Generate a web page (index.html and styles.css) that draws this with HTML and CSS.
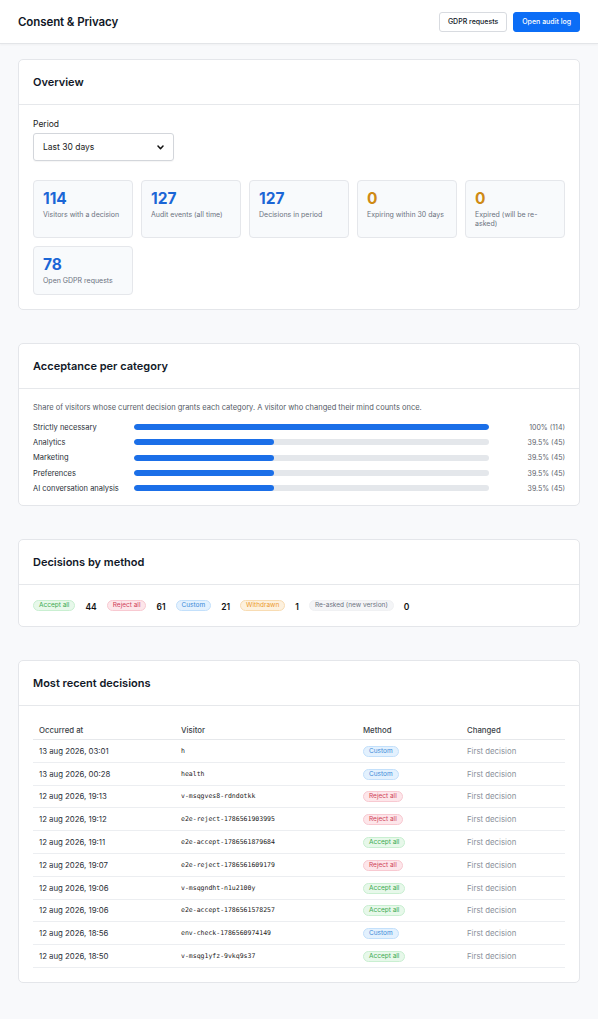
FILE: index.html
```html
<!DOCTYPE html>
<html lang="en">
<head>
<meta charset="utf-8">
<title>Consent & Privacy</title>
<link rel="stylesheet" href="styles.css">
</head>
<body>
<header class="topbar">
  <h1 class="page-title">Consent &amp; Privacy</h1>
  <div class="actions">
    <button class="btn btn-secondary">GDPR requests</button>
    <button class="btn btn-primary">Open audit log</button>
  </div>
</header>
<main class="content">
  <section class="card">
    <div class="card-header"><h2>Overview</h2></div>
    <div class="card-body">
      <label class="field-label">Period</label>
      <div class="select">
        <span>Last 30 days</span>
        <svg class="chev" width="7" height="5" viewBox="0 0 7 5"><path d="M1 1 L3.5 3.7 L6 1" fill="none" stroke="#111" stroke-width="1.5" stroke-linecap="round" stroke-linejoin="round"/></svg>
      </div>
      <div class="stats">
        <div class="stat"><div class="num blue">114</div><div class="lbl">Visitors with a decision</div></div>
        <div class="stat"><div class="num blue">127</div><div class="lbl">Audit events (all time)</div></div>
        <div class="stat"><div class="num blue">127</div><div class="lbl">Decisions in period</div></div>
        <div class="stat"><div class="num orange">0</div><div class="lbl">Expiring within 30 days</div></div>
        <div class="stat"><div class="num orange">0</div><div class="lbl">Expired (will be re-asked)</div></div>
        <div class="stat short"><div class="num blue">78</div><div class="lbl">Open GDPR requests</div></div>
      </div>
    </div>
  </section>

  <section class="card">
    <div class="card-header"><h2>Acceptance per category</h2></div>
    <div class="card-body bars-body">
      <p class="desc">Share of visitors whose current decision grants each category. A visitor who changed their mind counts once.</p>
      <div class="bars">
        <div class="bar-row"><span class="bar-label">Strictly necessary</span><div class="track"><div class="fill" style="width:100%"></div></div><span class="bar-val">100% (114)</span></div>
        <div class="bar-row"><span class="bar-label">Analytics</span><div class="track"><div class="fill" style="width:39.5%"></div></div><span class="bar-val">39.5% (45)</span></div>
        <div class="bar-row"><span class="bar-label">Marketing</span><div class="track"><div class="fill" style="width:39.5%"></div></div><span class="bar-val">39.5% (45)</span></div>
        <div class="bar-row"><span class="bar-label">Preferences</span><div class="track"><div class="fill" style="width:39.5%"></div></div><span class="bar-val">39.5% (45)</span></div>
        <div class="bar-row"><span class="bar-label">AI conversation analysis</span><div class="track"><div class="fill" style="width:39.5%"></div></div><span class="bar-val">39.5% (45)</span></div>
      </div>
    </div>
  </section>

  <section class="card">
    <div class="card-header"><h2>Decisions by method</h2></div>
    <div class="card-body methods">
      <span class="badge green">Accept all</span><span class="count">44</span>
      <span class="badge red">Reject all</span><span class="count">61</span>
      <span class="badge blue-b">Custom</span><span class="count">21</span>
      <span class="badge orange-b">Withdrawn</span><span class="count">1</span>
      <span class="badge gray">Re-asked (new version)</span><span class="count">0</span>
    </div>
  </section>

  <section class="card">
    <div class="card-header"><h2>Most recent decisions</h2></div>
    <div class="card-body">
      <table class="table">
        <thead>
          <tr><th class="c1">Occurred at</th><th class="c2">Visitor</th><th class="c3">Method</th><th>Changed</th></tr>
        </thead>
        <tbody>
          <tr><td>13 aug 2026, 03:01</td><td class="mono">h</td><td><span class="badge blue-b">Custom</span></td><td class="muted">First decision</td></tr>
          <tr><td>13 aug 2026, 00:28</td><td class="mono">health</td><td><span class="badge blue-b">Custom</span></td><td class="muted">First decision</td></tr>
          <tr><td>12 aug 2026, 19:13</td><td class="mono">v-msqgves8-rdndotkk</td><td><span class="badge red">Reject all</span></td><td class="muted">First decision</td></tr>
          <tr><td>12 aug 2026, 19:12</td><td class="mono">e2e-reject-1786561903995</td><td><span class="badge red">Reject all</span></td><td class="muted">First decision</td></tr>
          <tr><td>12 aug 2026, 19:11</td><td class="mono">e2e-accept-1786561879684</td><td><span class="badge green">Accept all</span></td><td class="muted">First decision</td></tr>
          <tr><td>12 aug 2026, 19:07</td><td class="mono">e2e-reject-1786561609179</td><td><span class="badge red">Reject all</span></td><td class="muted">First decision</td></tr>
          <tr><td>12 aug 2026, 19:06</td><td class="mono">v-msqgndht-n1u2100y</td><td><span class="badge green">Accept all</span></td><td class="muted">First decision</td></tr>
          <tr><td>12 aug 2026, 19:06</td><td class="mono">e2e-accept-1786561578257</td><td><span class="badge green">Accept all</span></td><td class="muted">First decision</td></tr>
          <tr><td>12 aug 2026, 18:56</td><td class="mono">env-check-1786560974149</td><td><span class="badge blue-b">Custom</span></td><td class="muted">First decision</td></tr>
          <tr><td>12 aug 2026, 18:50</td><td class="mono">v-msqg1yfz-9vkq9s37</td><td><span class="badge green">Accept all</span></td><td class="muted">First decision</td></tr>
        </tbody>
      </table>
    </div>
  </section>
</main>
</body>
</html>
```

FILE: styles.css
```css
* { box-sizing: border-box; }
html, body { margin: 0; padding: 0; }
body {
  background: #f8f9fb;
  font-family: Inter, "Noto Sans", "Liberation Sans", sans-serif;
  color: #111827;
  width: 598px;
  min-height: 1019px;
}
.topbar {
  height: 44px;
  background: #fff;
  border-bottom: 1px solid #e3e5e8;
  box-shadow: 0 1px 2px rgba(0,0,0,0.04);
  display: flex;
  align-items: center;
  justify-content: space-between;
  padding: 0 18px;
}
.page-title {
  margin: 0;
  font-size: 11.5px;
  font-weight: 600;
  letter-spacing: -0.1px;
}
.actions { display: flex; gap: 6px; }
.btn {
  font-family: inherit;
  font-size: 7px;
  font-weight: 500;
  height: 20px;
  padding: 0 8px;
  border-radius: 3px;
  cursor: pointer;
  white-space: nowrap;
}
.btn-secondary { background: #fff; border: 1px solid #d8dbe0; color: #111827; }
.btn-primary { background: #0b6df6; border: 1px solid #0b6df6; color: #fff; }

.content { padding: 15px 18px 30px; display: flex; flex-direction: column; gap: 33px; }
.card {
  background: #fff;
  border: 1px solid #e4e6ea;
  border-radius: 5px;
}
.card-header {
  height: 45px;
  border-bottom: 1px solid #e6e8eb;
  display: flex;
  align-items: center;
  padding: 0 14px;
}
.card-header h2 { margin: 0; font-size: 11px; font-weight: 600; }
.card-body { padding: 14px 14px 14px; }
.bars-body { padding-bottom: 12px; }

.field-label { display: block; font-size: 8.5px; color: #222; margin-bottom: 4px; }
.select {
  width: 141px;
  height: 28px;
  border: 1px solid #d3d6db;
  border-radius: 3px;
  display: flex;
  align-items: center;
  justify-content: space-between;
  padding: 0 9px;
  font-size: 8.5px;
  color: #222;
  box-shadow: 0 1px 1px rgba(0,0,0,0.04);
}
.stats {
  margin-top: 19px;
  display: grid;
  grid-template-columns: repeat(5, 1fr);
  gap: 8px;
}
.stat {
  background: #f8fafc;
  border: 1px solid #e5e7eb;
  border-radius: 4px;
  height: 58px;
  padding: 8px 9px;
}
.stat.short { height: 49px; }
.num { font-size: 15.5px; font-weight: 700; line-height: 19px; }
.num.blue { color: #1b66d6; }
.num.orange { color: #cf8a14; }
.lbl { font-size: 7px; color: #6b7280; margin-top: 2px; line-height: 9px; }

.desc { margin: 0 0 10px; font-size: 7.5px; color: #555b66; }
.bars { display: flex; flex-direction: column; gap: 5px; }
.bar-row { display: flex; align-items: center; height: 10.3px; }
.bar-label { width: 101px; font-size: 7.5px; color: #2a2f38; white-space: nowrap; }
.track { width: 355px; height: 6px; background: #e4e7eb; border-radius: 3px; overflow: hidden; }
.fill { height: 100%; background: #1b6fe8; border-radius: 3px; }
.bar-val { flex: 1; text-align: right; font-size: 7px; color: #5d636d; }

.methods { display: flex; align-items: center; padding-top: 15px; padding-bottom: 15px; }
.badge {
  display: inline-block;
  font-size: 6.5px;
  line-height: 9px;
  padding: 0 5px;
  border-radius: 6px;
  border: 1px solid transparent;
  white-space: nowrap;
}
.green { background: #e7f8ea; color: #3aa94f; border-color: #c9efd1; }
.red { background: #fde6ea; color: #cf3d57; border-color: #f8c9d1; }
.blue-b { background: #e3f1fe; color: #3a8ad8; border-color: #c3e0fb; }
.orange-b { background: #fdf1de; color: #ec9a2c; border-color: #f8dcb3; }
.gray { background: #f4f5f7; color: #6b7280; border-color: #f0f1f3; }
.count { font-size: 8.5px; font-weight: 600; margin: 0 10px; color: #111; position: relative; top: 1px; }

.table { width: 100%; border-collapse: collapse; font-size: 7.8px; }
.table th {
  text-align: left;
  font-weight: 500;
  color: #3a3f48;
  padding: 3px 6px;
  height: 19px;
  border-bottom: 1px solid #e6e8eb;
}
.table td {
  padding: 0 6px;
  height: 22.8px;
  border-bottom: 1px solid #eceef1;
  color: #2a2f38;
}
.c1 { width: 142px; }
.c2 { width: 182px; }
.c3 { width: 104px; }
.table td.mono { font-family: "DejaVu Sans Mono", "Liberation Mono", monospace; font-size: 6.5px; color: #222; }
.table td.muted { color: #8b919b; }
```
